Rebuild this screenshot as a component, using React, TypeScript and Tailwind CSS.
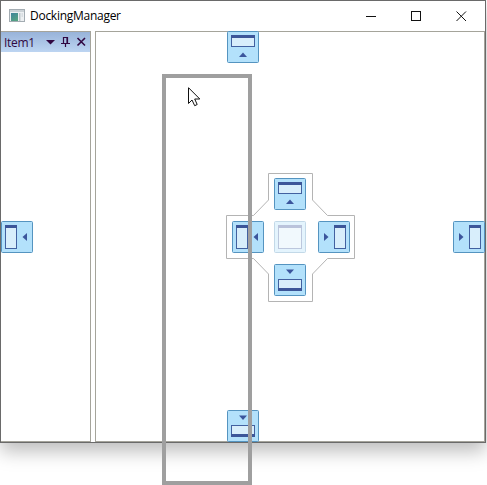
import React from "react";

type Side = "top" | "bottom" | "left" | "right" | "center";

const panes: Record<Side, { x: number; y: number; w: number; h: number; barY: number; arrow?: string }> = {
  top: { x: 4.5, y: 4.5, w: 23, h: 11, barY: 4, arrow: "M12 26 L16 21.5 L20 26 Z" },
  bottom: { x: 4.5, y: 15.5, w: 23, h: 11, barY: 24, arrow: "M12 5.5 L20 5.5 L16 10 Z" },
  left: { x: 4.5, y: 4.5, w: 11, h: 23, barY: 4, arrow: "M26 12 L26 20 L21.5 16 Z" },
  right: { x: 16.5, y: 4.5, w: 11, h: 23, barY: 4, arrow: "M6 12 L10.5 16 L6 20 Z" },
  center: { x: 4.5, y: 4.5, w: 23, h: 23, barY: 4 },
};

function DockHint({ side, className = "" }: { side: Side; className?: string }) {
  const p = panes[side];
  return (
    <svg width="32" height="32" viewBox="0 0 32 32" className={className}>
      <rect x="0.5" y="0.5" width="31" height="31" rx="1" fill="#b3e1fb" stroke="#5594c0" />
      <rect x={p.x} y={p.y} width={p.w} height={p.h} fill="#d8eefb" stroke="#4261a0" />
      <rect x={p.x - 0.5} y={p.barY} width={p.w + 1} height="3" fill="#3c5699" />
      {p.arrow && <path d={p.arrow} fill="#3b559c" />}
    </svg>
  );
}

function TitleBar() {
  return (
    <header className="flex h-[30px] items-center bg-white text-black">
      <svg width="16" height="14" viewBox="0 0 16 14" className="ml-2 mr-[5px]">
        <defs>
          <linearGradient id="app" x2="0.6" y2="1">
            <stop offset="0" stopColor="#3f849b" />
            <stop offset="1" stopColor="#55a283" />
          </linearGradient>
        </defs>
        <rect x="0.5" y="0.5" width="15" height="12" fill="#edf0f2" stroke="#a3acb2" />
        <rect x="1" y="1" width="14" height="2" fill="#cbd2d6" />
        <rect x="2" y="4" width="7" height="8" fill="url(#app)" />
        <rect x="10" y="4" width="1.5" height="8" fill="#c0c7cb" />
        <path d="M12.5 5h1.5M12.5 7h1.5" stroke="#c3cbd0" />
      </svg>
      <span className="text-[12px] leading-[16px] tracking-[-0.27px]">DockingManager</span>
      <div className="ml-auto mr-[18px] flex items-center gap-[35px]">
        <svg width="10" height="11" viewBox="0 0 10 11" stroke="#111">
          <path d="M0 5.5h10" />
        </svg>
        <svg width="10" height="11" viewBox="0 0 10 11" fill="none" stroke="#111">
          <rect x="0.5" y="0.5" width="9" height="9" />
        </svg>
        <svg width="11" height="11" viewBox="0 0 11 11" stroke="#111">
          <path d="M0.5 0.5l9.5 9.5M10 0.5L0.5 10" />
        </svg>
      </div>
    </header>
  );
}

function ItemPanel() {
  return (
    <section className="w-[90px] border border-l-0 border-[#a5a49b]">
      <div className="flex h-5 items-center bg-linear-to-b from-[#98b3d9] to-[#bdd5f2] text-[#310842]">
        <span className="ml-[3px] pt-px text-[12px] leading-4 tracking-[-0.3px]">Item1</span>
        <svg width="42" height="12" viewBox="0 0 42 12" className="ml-auto mr-[2px]">
          <path d="M0 4h9L4.5 8.5Z" fill="#310842" />
          <path d="M17.5 7V1.5h4V7M21 1v6M15 7.5h9M19.5 7v4" fill="none" stroke="#310842" strokeWidth="1.2" />
          <path d="M31.5 2l7.5 7.5m0-7.5L31.5 9.5" stroke="#310842" strokeWidth="1.6" />
        </svg>
      </div>
    </section>
  );
}

function Compass() {
  return (
    <div className="grid h-[129px] w-[129px]">
      <svg width="129" height="129" viewBox="0 0 129 129" className="col-start-1 row-start-1">
        <path
          d="M42.5 0.5H86.5V27L101.5 42.5H128.5V85.5H101.5L86.5 101V128.5H42.5V101L27.5 85.5H0.5V42.5H27.5L42.5 27Z"
          fill="#fff"
          stroke="#b4b4b4"
        />
      </svg>
      <div className="col-start-1 row-start-1 grid grid-cols-[42px_44px_32px] grid-rows-[43px_43px_32px] pl-1.5 pt-[5px]">
        <DockHint side="top" className="col-start-2" />
        <DockHint side="left" className="col-start-1 row-start-2" />
        <DockHint side="center" className="col-start-2 row-start-2 opacity-35" />
        <DockHint side="right" className="col-start-3 row-start-2" />
        <DockHint side="bottom" className="col-start-2 row-start-3" />
      </div>
    </div>
  );
}

function EdgeHints() {
  return (
    <div className="absolute inset-0 grid grid-rows-[190px_1fr_32px] justify-items-center">
      <DockHint side="top" />
      <div className="flex w-full items-start justify-between">
        <DockHint side="left" />
        <DockHint side="right" />
      </div>
      <DockHint side="bottom" />
    </div>
  );
}

export default function App() {
  return (
    <div className="relative h-[485px] w-[487px] overflow-hidden bg-white font-['Open_Sans',sans-serif]">
      <div className="flex h-[443px] w-[486px] flex-col border border-[#6a6a6a] bg-white shadow-[0_8px_18px_0_rgba(0,0,0,0.27)]">
        <TitleBar />
        <main className="relative flex min-h-0 flex-1 gap-1">
          <ItemPanel />
          <section className="flex flex-1 items-center justify-center border border-[#a5a49b] pl-px pt-0.5">
            <Compass />
          </section>
          <EdgeHints />
        </main>
      </div>

      <div className="absolute left-[162px] top-[74px] h-[411px] w-[90px] border-4 border-[#9f9f9f]" />
      <svg width="14" height="21" viewBox="0 0 14 21" className="absolute left-[188px] top-[87px]">
        <path d="M0.5 0.7V16.5L4 13L6.7 18.7L9.2 17.5L6.7 12H11.8Z" fill="#fff" stroke="#111" />
      </svg>
    </div>
  );
}
